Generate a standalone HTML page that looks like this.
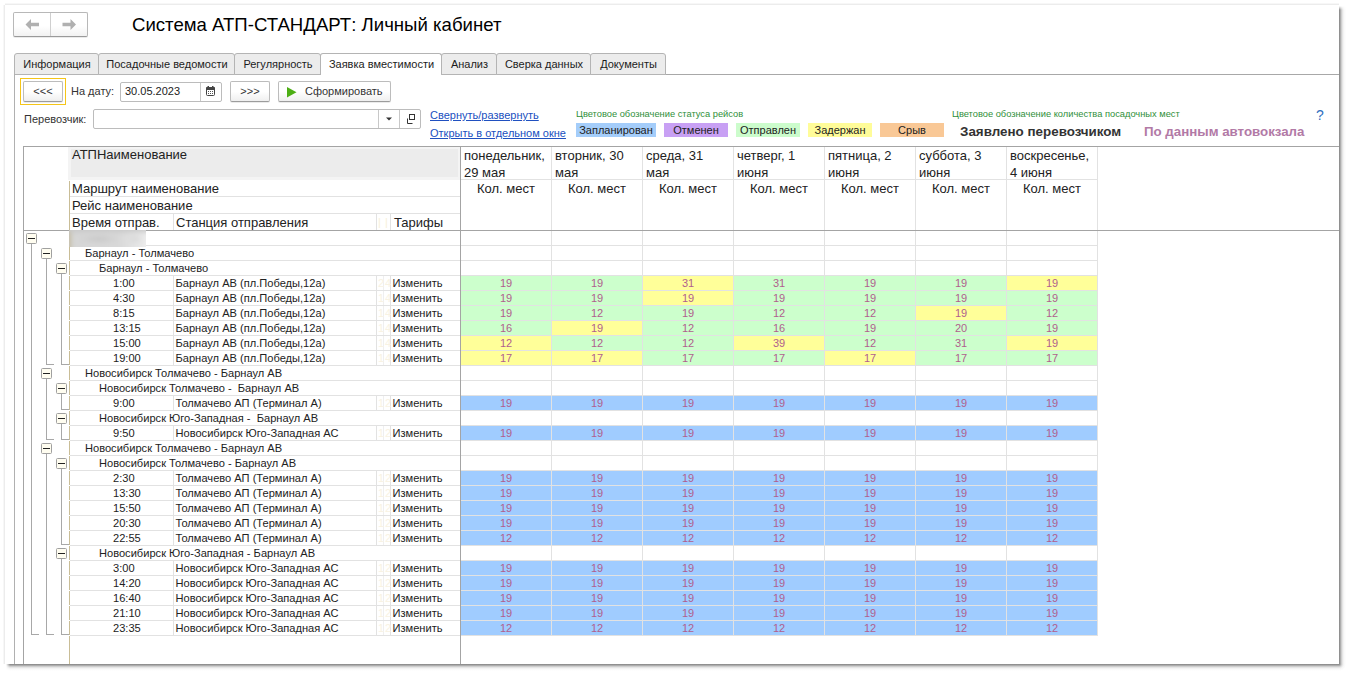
<!DOCTYPE html>
<html><head><meta charset="utf-8"><style>
html,body{margin:0;padding:0;width:1348px;height:673px;overflow:hidden;background:#fff}
.t{position:absolute;font-family:"Liberation Sans", sans-serif;white-space:nowrap;line-height:1.15}
</style></head><body>
<div style="position:absolute;left:4px;top:4px;width:1335px;height:660px;background:#fff;"></div><div style="position:absolute;left:5px;top:4px;width:1334px;height:1px;background:#ececec"></div><div style="position:absolute;left:4px;top:5px;width:1px;height:659px;background:#ececec"></div><div style="position:absolute;left:5px;top:3px;width:1334px;height:1px;background:#f7f7f7"></div><div style="position:absolute;left:3px;top:5px;width:1px;height:659px;background:#f7f7f7"></div><div style="position:absolute;left:1339px;top:6px;width:7px;height:658px;background:linear-gradient(90deg,#858585 0px,#9a9a9a 1px,#c0c0c0 2px,#dcdcdc 3px,#eeeeee 4px,#f8f8f8 5px,#fff 7px);-webkit-mask:linear-gradient(180deg,transparent 0,#000 4px)"></div><div style="position:absolute;left:6px;top:664px;width:1333px;height:7px;background:linear-gradient(180deg,#858585 0px,#9a9a9a 1px,#c0c0c0 2px,#dcdcdc 3px,#eeeeee 4px,#f8f8f8 5px,#fff 7px);-webkit-mask:linear-gradient(90deg,transparent 0,#000 4px)"></div><div style="position:absolute;left:1339px;top:664px;width:7px;height:7px;background:radial-gradient(circle at 0 0,#858585 0px,#9a9a9a 1px,#c0c0c0 2px,#dcdcdc 3px,#eeeeee 4px,#f8f8f8 5px,#fff 7px)"></div><div style="position:absolute;left:13px;top:12px;width:75px;height:25px;box-sizing:border-box;border:1px solid #b8b8b8;border-bottom-color:#9a9a9a;border-radius:2px;background:linear-gradient(#ffffff 0%,#ffffff 55%,#f2f2f2 100%);box-shadow:0 1px 0 rgba(0,0,0,.08);"></div><div style="position:absolute;left:50px;top:13px;width:1px;height:23px;background:#cfcfcf"></div><svg style="position:absolute;left:13px;top:12px" width="75" height="25"><path d="M12.5 12.5 L18 7 L18 10.7 L26 10.7 L26 14.3 L18 14.3 L18 18 Z" fill="#b0b0b0"/><path d="M63 12.5 L57.5 7 L57.5 10.7 L49.5 10.7 L49.5 14.3 L57.5 14.3 L57.5 18 Z" fill="#b0b0b0"/></svg><div class="t" style="left:132px;top:14px;font-size:18.6px;color:#000;">Система АТП-СТАНДАРТ: Личный кабинет</div><div style="position:absolute;left:14px;top:74px;width:1325px;height:1px;background:#a8a8a8"></div><div style="position:absolute;left:14px;top:53px;width:85px;height:22px;box-sizing:border-box;border:1px solid #b4b4b4;border-radius:3px 3px 0 0;background:#ececec;"></div><div class="t" style="left:15px;top:58px;width:84px;text-align:center;font-size:11px;color:#1c1c1c">Информация</div><div style="position:absolute;left:98px;top:53px;width:137px;height:22px;box-sizing:border-box;border:1px solid #b4b4b4;border-radius:3px 3px 0 0;background:#ececec;"></div><div class="t" style="left:99px;top:58px;width:136px;text-align:center;font-size:11px;color:#1c1c1c">Посадочные ведомости</div><div style="position:absolute;left:234px;top:53px;width:87px;height:22px;box-sizing:border-box;border:1px solid #b4b4b4;border-radius:3px 3px 0 0;background:#ececec;"></div><div class="t" style="left:235px;top:58px;width:86px;text-align:center;font-size:11px;color:#1c1c1c">Регулярность</div><div style="position:absolute;left:320px;top:53px;width:122px;height:22px;box-sizing:border-box;border:1px solid #b4b4b4;border-bottom:none;border-radius:3px 3px 0 0;background:#fff;"></div><div class="t" style="left:321px;top:58px;width:121px;text-align:center;font-size:11px;color:#1c1c1c">Заявка вместимости</div><div style="position:absolute;left:441px;top:53px;width:56px;height:22px;box-sizing:border-box;border:1px solid #b4b4b4;border-radius:3px 3px 0 0;background:#ececec;"></div><div class="t" style="left:442px;top:58px;width:55px;text-align:center;font-size:11px;color:#1c1c1c">Анализ</div><div style="position:absolute;left:496px;top:53px;width:95px;height:22px;box-sizing:border-box;border:1px solid #b4b4b4;border-radius:3px 3px 0 0;background:#ececec;"></div><div class="t" style="left:497px;top:58px;width:94px;text-align:center;font-size:11px;color:#1c1c1c">Сверка данных</div><div style="position:absolute;left:590px;top:53px;width:76px;height:22px;box-sizing:border-box;border:1px solid #b4b4b4;border-radius:3px 3px 0 0;background:#ececec;"></div><div class="t" style="left:591px;top:58px;width:75px;text-align:center;font-size:11px;color:#1c1c1c">Документы</div><div style="position:absolute;left:14px;top:74px;width:1px;height:590px;background:#b0b0b0"></div><div style="position:absolute;left:20px;top:78px;width:46px;height:27px;box-sizing:border-box;border:1px solid #f5c518;"></div><div style="position:absolute;left:23px;top:81px;width:40px;height:21px;box-sizing:border-box;border:1px solid #bcbcbc;border-bottom-color:#9c9c9c;border-radius:2px;background:linear-gradient(#fff 0%,#fff 50%,#efefef 100%);box-shadow:0 1px 0 rgba(0,0,0,.08)"></div><div class="t" style="left:23px;top:85px;font-size:11px;color:#333;width:40px;text-align:center">&lt;&lt;&lt;</div><div class="t" style="left:71px;top:85px;font-size:11px;color:#333;">На дату:</div><div style="position:absolute;left:120px;top:82px;width:102px;height:20px;box-sizing:border-box;border:1px solid #bcbcbc;border-radius:2px;background:#fff"></div><div style="position:absolute;left:200px;top:83px;width:1px;height:18px;background:#c8c8c8"></div><div class="t" style="left:125px;top:85px;font-size:11px;color:#222;">30.05.2023</div><svg style="position:absolute;left:206px;top:86px" width="9" height="10"><rect x="0.5" y="1.5" width="8" height="8" rx="1" fill="none" stroke="#444"/><rect x="0" y="1" width="9" height="3" rx="1" fill="#444"/><rect x="1.5" y="0" width="1.5" height="2" fill="#444"/><rect x="6" y="0" width="1.5" height="2" fill="#444"/><g fill="#555"><rect x="2" y="5" width="1" height="1"/><rect x="4" y="5" width="1" height="1"/><rect x="6" y="5" width="1" height="1"/><rect x="2" y="7" width="1" height="1"/><rect x="4" y="7" width="1" height="1"/><rect x="6" y="7" width="1" height="1"/></g></svg><div style="position:absolute;left:230px;top:81px;width:40px;height:21px;box-sizing:border-box;border:1px solid #bcbcbc;border-bottom-color:#9c9c9c;border-radius:2px;background:linear-gradient(#fff 0%,#fff 50%,#efefef 100%);box-shadow:0 1px 0 rgba(0,0,0,.08)"></div><div class="t" style="left:230px;top:85px;font-size:11px;color:#333;width:40px;text-align:center">&gt;&gt;&gt;</div><div style="position:absolute;left:278px;top:81px;width:113px;height:21px;box-sizing:border-box;border:1px solid #bcbcbc;border-bottom-color:#9c9c9c;border-radius:2px;background:linear-gradient(#fff 0%,#fff 50%,#efefef 100%);box-shadow:0 1px 0 rgba(0,0,0,.08)"></div><svg style="position:absolute;left:287px;top:87px" width="10" height="11"><path d="M0 0 L9.5 5.2 L0 10.5 Z" fill="#4cae14"/></svg><div class="t" style="left:305px;top:85px;font-size:11px;color:#333;">Сформировать</div><div class="t" style="left:24px;top:113px;font-size:11px;color:#333;">Перевозчик:</div><div style="position:absolute;left:93px;top:109px;width:328px;height:20px;box-sizing:border-box;border:1px solid #bcbcbc;border-radius:2px;background:#fff"></div><div style="position:absolute;left:378px;top:110px;width:1px;height:18px;background:#c8c8c8"></div><div style="position:absolute;left:399px;top:110px;width:1px;height:18px;background:#c8c8c8"></div><svg style="position:absolute;left:384px;top:115px" width="10" height="8"><path d="M2 2.5 L8 2.5 L5 5.5 Z" fill="#333"/></svg><svg style="position:absolute;left:403px;top:112px" width="14" height="14"><path d="M4.5 6.5 V11.5 H9.5" fill="none" stroke="#333"/><rect x="6.5" y="2.5" width="5" height="5" fill="none" stroke="#333"/></svg><div class="t" style="left:430px;top:109px;font-size:11px;color:#2050c0;text-decoration:underline">Свернуть/развернуть</div><div class="t" style="left:430px;top:127px;font-size:11px;color:#2050c0;text-decoration:underline">Открыть в отдельном окне</div><div class="t" style="left:576px;top:109px;font-size:9.3px;color:#2f8f3a;">Цветовое обозначение статуса рейсов</div><div style="position:absolute;left:576px;top:123px;width:80px;height:14px;background:#a4cdfa"></div><div class="t" style="left:576px;top:124px;font-size:11px;color:#222;width:80px;text-align:center">Запланирован</div><div style="position:absolute;left:664px;top:123px;width:64px;height:14px;background:#c8a0f4"></div><div class="t" style="left:664px;top:124px;font-size:11px;color:#222;width:64px;text-align:center">Отменен</div><div style="position:absolute;left:736px;top:123px;width:64px;height:14px;background:#ccfccc"></div><div class="t" style="left:736px;top:124px;font-size:11px;color:#222;width:64px;text-align:center">Отправлен</div><div style="position:absolute;left:808px;top:123px;width:64px;height:14px;background:#fffc99"></div><div class="t" style="left:808px;top:124px;font-size:11px;color:#222;width:64px;text-align:center">Задержан</div><div style="position:absolute;left:880px;top:123px;width:64px;height:14px;background:#f9c896"></div><div class="t" style="left:880px;top:124px;font-size:11px;color:#222;width:64px;text-align:center">Срыв</div><div class="t" style="left:952px;top:109px;font-size:9.3px;color:#2f8f3a;">Цветовое обозначение количества посадочных мест</div><div class="t" style="left:960px;top:124px;font-size:13.4px;color:#333;font-weight:bold">Заявлено перевозчиком</div><div class="t" style="left:1144px;top:124px;font-size:13.3px;color:#b27aa6;font-weight:bold">По данным автовокзала</div><div class="t" style="left:1316px;top:107px;font-size:14px;color:#3070c0;">?</div>
<div style="position:absolute;left:0;top:0;width:1339px;height:664px;overflow:hidden">
<div style="position:absolute;left:23px;top:146px;width:1316px;height:1px;background:#a4a4a4"></div><div style="position:absolute;left:23px;top:146px;width:1px;height:518px;background:#a4a4a4"></div><div style="position:absolute;left:460px;top:146px;width:1px;height:518px;background:#a4a4a4"></div><div style="position:absolute;left:23px;top:230px;width:1316px;height:1px;background:#a4a4a4"></div><div style="position:absolute;left:68px;top:147px;width:392px;height:33px;background:#f4f4f4"></div><div style="position:absolute;left:71px;top:149px;width:387px;height:28px;background:#ececec"></div><div class="t" style="left:72px;top:148px;font-size:13px;color:#222;">АТПНаименование</div><div style="position:absolute;left:69px;top:181px;width:1px;height:49px;background:#c9bd96"></div><div style="position:absolute;left:70px;top:196px;width:390px;height:1px;background:#e2e2e2"></div><div style="position:absolute;left:70px;top:213px;width:390px;height:1px;background:#e2e2e2"></div><div class="t" style="left:72px;top:182px;font-size:13px;color:#222;">Маршрут наименование</div><div class="t" style="left:72px;top:199px;font-size:13px;color:#222;">Рейс наименование</div><div class="t" style="left:72px;top:216px;font-size:13px;color:#222;">Время отправ.</div><div style="position:absolute;left:173px;top:214px;width:1px;height:16px;background:#e2e2e2"></div><div class="t" style="left:176px;top:216px;font-size:13px;color:#222;">Станция отправления</div><div style="position:absolute;left:376px;top:214px;width:1px;height:16px;background:#e2e2e2"></div><div style="position:absolute;left:390px;top:214px;width:1px;height:16px;background:#e2e2e2"></div><div class="t" style="left:378px;top:216px;font-size:11px;color:#f8f0d8;">|</div><div class="t" style="left:385px;top:216px;font-size:11px;color:#f8f0d8;">|</div><div class="t" style="left:394px;top:216px;font-size:13px;color:#222;">Тарифы</div><div class="t" style="left:464px;top:149px;font-size:13px;color:#222;">понедельник,</div><div class="t" style="left:464px;top:166px;font-size:13px;color:#222;">29 мая</div><div class="t" style="left:461px;top:182px;font-size:13px;color:#222;width:90px;text-align:center">Кол. мест</div><div class="t" style="left:555px;top:149px;font-size:13px;color:#222;">вторник, 30</div><div class="t" style="left:555px;top:166px;font-size:13px;color:#222;">мая</div><div class="t" style="left:552px;top:182px;font-size:13px;color:#222;width:90px;text-align:center">Кол. мест</div><div class="t" style="left:646px;top:149px;font-size:13px;color:#222;">среда, 31</div><div class="t" style="left:646px;top:166px;font-size:13px;color:#222;">мая</div><div class="t" style="left:643px;top:182px;font-size:13px;color:#222;width:90px;text-align:center">Кол. мест</div><div class="t" style="left:737px;top:149px;font-size:13px;color:#222;">четверг, 1</div><div class="t" style="left:737px;top:166px;font-size:13px;color:#222;">июня</div><div class="t" style="left:734px;top:182px;font-size:13px;color:#222;width:90px;text-align:center">Кол. мест</div><div class="t" style="left:828px;top:149px;font-size:13px;color:#222;">пятница, 2</div><div class="t" style="left:828px;top:166px;font-size:13px;color:#222;">июня</div><div class="t" style="left:825px;top:182px;font-size:13px;color:#222;width:90px;text-align:center">Кол. мест</div><div class="t" style="left:919px;top:149px;font-size:13px;color:#222;">суббота, 3</div><div class="t" style="left:919px;top:166px;font-size:13px;color:#222;">июня</div><div class="t" style="left:916px;top:182px;font-size:13px;color:#222;width:90px;text-align:center">Кол. мест</div><div class="t" style="left:1010px;top:149px;font-size:13px;color:#222;">воскресенье,</div><div class="t" style="left:1010px;top:166px;font-size:13px;color:#222;">4 июня</div><div class="t" style="left:1007px;top:182px;font-size:13px;color:#222;width:90px;text-align:center">Кол. мест</div><div style="position:absolute;left:551px;top:147px;width:1px;height:83px;background:#e2e2e2"></div><div style="position:absolute;left:642px;top:147px;width:1px;height:83px;background:#e2e2e2"></div><div style="position:absolute;left:733px;top:147px;width:1px;height:83px;background:#e2e2e2"></div><div style="position:absolute;left:824px;top:147px;width:1px;height:83px;background:#e2e2e2"></div><div style="position:absolute;left:915px;top:147px;width:1px;height:83px;background:#e2e2e2"></div><div style="position:absolute;left:1006px;top:147px;width:1px;height:83px;background:#e2e2e2"></div><div style="position:absolute;left:1097px;top:147px;width:1px;height:83px;background:#e2e2e2"></div><div style="position:absolute;left:461px;top:179px;width:636px;height:1px;background:#e2e2e2"></div><div style="position:absolute;left:70px;top:245px;width:390px;height:1px;background:#e2e2e2"></div><div style="position:absolute;left:69px;top:231px;width:1px;height:14px;background:#c9bd96"></div><div style="position:absolute;left:551px;top:231px;width:1px;height:15px;background:#e2e2e2"></div><div style="position:absolute;left:642px;top:231px;width:1px;height:15px;background:#e2e2e2"></div><div style="position:absolute;left:733px;top:231px;width:1px;height:15px;background:#e2e2e2"></div><div style="position:absolute;left:824px;top:231px;width:1px;height:15px;background:#e2e2e2"></div><div style="position:absolute;left:915px;top:231px;width:1px;height:15px;background:#e2e2e2"></div><div style="position:absolute;left:1006px;top:231px;width:1px;height:15px;background:#e2e2e2"></div><div style="position:absolute;left:1097px;top:231px;width:1px;height:15px;background:#e2e2e2"></div><div style="position:absolute;left:461px;top:245px;width:636px;height:1px;background:#e2e2e2"></div><div style="position:absolute;left:70px;top:260px;width:390px;height:1px;background:#e2e2e2"></div><div style="position:absolute;left:69px;top:246px;width:1px;height:14px;background:#c9bd96"></div><div class="t" style="left:85px;top:247px;font-size:11.1px;color:#222;">Барнаул - Толмачево</div><div style="position:absolute;left:551px;top:246px;width:1px;height:15px;background:#e2e2e2"></div><div style="position:absolute;left:642px;top:246px;width:1px;height:15px;background:#e2e2e2"></div><div style="position:absolute;left:733px;top:246px;width:1px;height:15px;background:#e2e2e2"></div><div style="position:absolute;left:824px;top:246px;width:1px;height:15px;background:#e2e2e2"></div><div style="position:absolute;left:915px;top:246px;width:1px;height:15px;background:#e2e2e2"></div><div style="position:absolute;left:1006px;top:246px;width:1px;height:15px;background:#e2e2e2"></div><div style="position:absolute;left:1097px;top:246px;width:1px;height:15px;background:#e2e2e2"></div><div style="position:absolute;left:461px;top:260px;width:636px;height:1px;background:#e2e2e2"></div><div style="position:absolute;left:70px;top:275px;width:390px;height:1px;background:#e2e2e2"></div><div style="position:absolute;left:69px;top:261px;width:1px;height:14px;background:#c9bd96"></div><div class="t" style="left:99px;top:262px;font-size:11.1px;color:#222;">Барнаул - Толмачево</div><div style="position:absolute;left:551px;top:261px;width:1px;height:15px;background:#e2e2e2"></div><div style="position:absolute;left:642px;top:261px;width:1px;height:15px;background:#e2e2e2"></div><div style="position:absolute;left:733px;top:261px;width:1px;height:15px;background:#e2e2e2"></div><div style="position:absolute;left:824px;top:261px;width:1px;height:15px;background:#e2e2e2"></div><div style="position:absolute;left:915px;top:261px;width:1px;height:15px;background:#e2e2e2"></div><div style="position:absolute;left:1006px;top:261px;width:1px;height:15px;background:#e2e2e2"></div><div style="position:absolute;left:1097px;top:261px;width:1px;height:15px;background:#e2e2e2"></div><div style="position:absolute;left:461px;top:275px;width:636px;height:1px;background:#e2e2e2"></div><div style="position:absolute;left:70px;top:290px;width:390px;height:1px;background:#e2e2e2"></div><div style="position:absolute;left:69px;top:276px;width:1px;height:14px;background:#c9bd96"></div><div class="t" style="left:113px;top:277px;font-size:11.1px;color:#222;">1:00</div><div style="position:absolute;left:173px;top:276px;width:1px;height:14px;background:#e2e2e2"></div><div class="t" style="left:175.5px;top:277px;font-size:11.1px;color:#222;">Барнаул АВ (пл.Победы,12а)</div><div style="position:absolute;left:376px;top:276px;width:1px;height:14px;background:#e2e2e2"></div><div style="position:absolute;left:383px;top:276px;width:1px;height:14px;background:#efefef"></div><div style="position:absolute;left:390px;top:276px;width:1px;height:14px;background:#e2e2e2"></div><div class="t" style="left:378px;top:277px;font-size:11px;color:#f8f2e2;">2</div><div class="t" style="left:385px;top:277px;font-size:11px;color:#f8f2e2;">4</div><div class="t" style="left:392.5px;top:277px;font-size:11.1px;color:#222;">Изменить</div><div style="position:absolute;left:461px;top:276px;width:90px;height:14px;background:#ccffcc"></div><div class="t" style="left:461px;top:277px;font-size:11px;color:#b0608e;width:90px;text-align:center">19</div><div style="position:absolute;left:552px;top:276px;width:90px;height:14px;background:#ccffcc"></div><div class="t" style="left:552px;top:277px;font-size:11px;color:#b0608e;width:90px;text-align:center">19</div><div style="position:absolute;left:643px;top:276px;width:90px;height:14px;background:#ffff99"></div><div class="t" style="left:643px;top:277px;font-size:11px;color:#b0608e;width:90px;text-align:center">31</div><div style="position:absolute;left:734px;top:276px;width:90px;height:14px;background:#ccffcc"></div><div class="t" style="left:734px;top:277px;font-size:11px;color:#b0608e;width:90px;text-align:center">31</div><div style="position:absolute;left:825px;top:276px;width:90px;height:14px;background:#ccffcc"></div><div class="t" style="left:825px;top:277px;font-size:11px;color:#b0608e;width:90px;text-align:center">19</div><div style="position:absolute;left:916px;top:276px;width:90px;height:14px;background:#ccffcc"></div><div class="t" style="left:916px;top:277px;font-size:11px;color:#b0608e;width:90px;text-align:center">19</div><div style="position:absolute;left:1007px;top:276px;width:90px;height:14px;background:#ffff99"></div><div class="t" style="left:1007px;top:277px;font-size:11px;color:#b0608e;width:90px;text-align:center">19</div><div style="position:absolute;left:551px;top:276px;width:1px;height:15px;background:#e2e2e2"></div><div style="position:absolute;left:642px;top:276px;width:1px;height:15px;background:#e2e2e2"></div><div style="position:absolute;left:733px;top:276px;width:1px;height:15px;background:#e2e2e2"></div><div style="position:absolute;left:824px;top:276px;width:1px;height:15px;background:#e2e2e2"></div><div style="position:absolute;left:915px;top:276px;width:1px;height:15px;background:#e2e2e2"></div><div style="position:absolute;left:1006px;top:276px;width:1px;height:15px;background:#e2e2e2"></div><div style="position:absolute;left:1097px;top:276px;width:1px;height:15px;background:#e2e2e2"></div><div style="position:absolute;left:461px;top:290px;width:636px;height:1px;background:#e2e2e2"></div><div style="position:absolute;left:70px;top:305px;width:390px;height:1px;background:#e2e2e2"></div><div style="position:absolute;left:69px;top:291px;width:1px;height:14px;background:#c9bd96"></div><div class="t" style="left:113px;top:292px;font-size:11.1px;color:#222;">4:30</div><div style="position:absolute;left:173px;top:291px;width:1px;height:14px;background:#e2e2e2"></div><div class="t" style="left:175.5px;top:292px;font-size:11.1px;color:#222;">Барнаул АВ (пл.Победы,12а)</div><div style="position:absolute;left:376px;top:291px;width:1px;height:14px;background:#e2e2e2"></div><div style="position:absolute;left:383px;top:291px;width:1px;height:14px;background:#efefef"></div><div style="position:absolute;left:390px;top:291px;width:1px;height:14px;background:#e2e2e2"></div><div class="t" style="left:378px;top:292px;font-size:11px;color:#f8f2e2;">1</div><div class="t" style="left:385px;top:292px;font-size:11px;color:#f8f2e2;">4</div><div class="t" style="left:392.5px;top:292px;font-size:11.1px;color:#222;">Изменить</div><div style="position:absolute;left:461px;top:291px;width:90px;height:14px;background:#ccffcc"></div><div class="t" style="left:461px;top:292px;font-size:11px;color:#b0608e;width:90px;text-align:center">19</div><div style="position:absolute;left:552px;top:291px;width:90px;height:14px;background:#ccffcc"></div><div class="t" style="left:552px;top:292px;font-size:11px;color:#b0608e;width:90px;text-align:center">19</div><div style="position:absolute;left:643px;top:291px;width:90px;height:14px;background:#ffff99"></div><div class="t" style="left:643px;top:292px;font-size:11px;color:#b0608e;width:90px;text-align:center">19</div><div style="position:absolute;left:734px;top:291px;width:90px;height:14px;background:#ccffcc"></div><div class="t" style="left:734px;top:292px;font-size:11px;color:#b0608e;width:90px;text-align:center">19</div><div style="position:absolute;left:825px;top:291px;width:90px;height:14px;background:#ccffcc"></div><div class="t" style="left:825px;top:292px;font-size:11px;color:#b0608e;width:90px;text-align:center">19</div><div style="position:absolute;left:916px;top:291px;width:90px;height:14px;background:#ccffcc"></div><div class="t" style="left:916px;top:292px;font-size:11px;color:#b0608e;width:90px;text-align:center">19</div><div style="position:absolute;left:1007px;top:291px;width:90px;height:14px;background:#ccffcc"></div><div class="t" style="left:1007px;top:292px;font-size:11px;color:#b0608e;width:90px;text-align:center">19</div><div style="position:absolute;left:551px;top:291px;width:1px;height:15px;background:#e2e2e2"></div><div style="position:absolute;left:642px;top:291px;width:1px;height:15px;background:#e2e2e2"></div><div style="position:absolute;left:733px;top:291px;width:1px;height:15px;background:#e2e2e2"></div><div style="position:absolute;left:824px;top:291px;width:1px;height:15px;background:#e2e2e2"></div><div style="position:absolute;left:915px;top:291px;width:1px;height:15px;background:#e2e2e2"></div><div style="position:absolute;left:1006px;top:291px;width:1px;height:15px;background:#e2e2e2"></div><div style="position:absolute;left:1097px;top:291px;width:1px;height:15px;background:#e2e2e2"></div><div style="position:absolute;left:461px;top:305px;width:636px;height:1px;background:#e2e2e2"></div><div style="position:absolute;left:70px;top:320px;width:390px;height:1px;background:#e2e2e2"></div><div style="position:absolute;left:69px;top:306px;width:1px;height:14px;background:#c9bd96"></div><div class="t" style="left:113px;top:307px;font-size:11.1px;color:#222;">8:15</div><div style="position:absolute;left:173px;top:306px;width:1px;height:14px;background:#e2e2e2"></div><div class="t" style="left:175.5px;top:307px;font-size:11.1px;color:#222;">Барнаул АВ (пл.Победы,12а)</div><div style="position:absolute;left:376px;top:306px;width:1px;height:14px;background:#e2e2e2"></div><div style="position:absolute;left:383px;top:306px;width:1px;height:14px;background:#efefef"></div><div style="position:absolute;left:390px;top:306px;width:1px;height:14px;background:#e2e2e2"></div><div class="t" style="left:378px;top:307px;font-size:11px;color:#f8f2e2;">1</div><div class="t" style="left:385px;top:307px;font-size:11px;color:#f8f2e2;">4</div><div class="t" style="left:392.5px;top:307px;font-size:11.1px;color:#222;">Изменить</div><div style="position:absolute;left:461px;top:306px;width:90px;height:14px;background:#ccffcc"></div><div class="t" style="left:461px;top:307px;font-size:11px;color:#b0608e;width:90px;text-align:center">19</div><div style="position:absolute;left:552px;top:306px;width:90px;height:14px;background:#ccffcc"></div><div class="t" style="left:552px;top:307px;font-size:11px;color:#b0608e;width:90px;text-align:center">12</div><div style="position:absolute;left:643px;top:306px;width:90px;height:14px;background:#ccffcc"></div><div class="t" style="left:643px;top:307px;font-size:11px;color:#b0608e;width:90px;text-align:center">19</div><div style="position:absolute;left:734px;top:306px;width:90px;height:14px;background:#ccffcc"></div><div class="t" style="left:734px;top:307px;font-size:11px;color:#b0608e;width:90px;text-align:center">12</div><div style="position:absolute;left:825px;top:306px;width:90px;height:14px;background:#ccffcc"></div><div class="t" style="left:825px;top:307px;font-size:11px;color:#b0608e;width:90px;text-align:center">12</div><div style="position:absolute;left:916px;top:306px;width:90px;height:14px;background:#ffff99"></div><div class="t" style="left:916px;top:307px;font-size:11px;color:#b0608e;width:90px;text-align:center">19</div><div style="position:absolute;left:1007px;top:306px;width:90px;height:14px;background:#ccffcc"></div><div class="t" style="left:1007px;top:307px;font-size:11px;color:#b0608e;width:90px;text-align:center">12</div><div style="position:absolute;left:551px;top:306px;width:1px;height:15px;background:#e2e2e2"></div><div style="position:absolute;left:642px;top:306px;width:1px;height:15px;background:#e2e2e2"></div><div style="position:absolute;left:733px;top:306px;width:1px;height:15px;background:#e2e2e2"></div><div style="position:absolute;left:824px;top:306px;width:1px;height:15px;background:#e2e2e2"></div><div style="position:absolute;left:915px;top:306px;width:1px;height:15px;background:#e2e2e2"></div><div style="position:absolute;left:1006px;top:306px;width:1px;height:15px;background:#e2e2e2"></div><div style="position:absolute;left:1097px;top:306px;width:1px;height:15px;background:#e2e2e2"></div><div style="position:absolute;left:461px;top:320px;width:636px;height:1px;background:#e2e2e2"></div><div style="position:absolute;left:70px;top:335px;width:390px;height:1px;background:#e2e2e2"></div><div style="position:absolute;left:69px;top:321px;width:1px;height:14px;background:#c9bd96"></div><div class="t" style="left:113px;top:322px;font-size:11.1px;color:#222;">13:15</div><div style="position:absolute;left:173px;top:321px;width:1px;height:14px;background:#e2e2e2"></div><div class="t" style="left:175.5px;top:322px;font-size:11.1px;color:#222;">Барнаул АВ (пл.Победы,12а)</div><div style="position:absolute;left:376px;top:321px;width:1px;height:14px;background:#e2e2e2"></div><div style="position:absolute;left:383px;top:321px;width:1px;height:14px;background:#efefef"></div><div style="position:absolute;left:390px;top:321px;width:1px;height:14px;background:#e2e2e2"></div><div class="t" style="left:378px;top:322px;font-size:11px;color:#f8f2e2;">1</div><div class="t" style="left:385px;top:322px;font-size:11px;color:#f8f2e2;">4</div><div class="t" style="left:392.5px;top:322px;font-size:11.1px;color:#222;">Изменить</div><div style="position:absolute;left:461px;top:321px;width:90px;height:14px;background:#ccffcc"></div><div class="t" style="left:461px;top:322px;font-size:11px;color:#b0608e;width:90px;text-align:center">16</div><div style="position:absolute;left:552px;top:321px;width:90px;height:14px;background:#ffff99"></div><div class="t" style="left:552px;top:322px;font-size:11px;color:#b0608e;width:90px;text-align:center">19</div><div style="position:absolute;left:643px;top:321px;width:90px;height:14px;background:#ccffcc"></div><div class="t" style="left:643px;top:322px;font-size:11px;color:#b0608e;width:90px;text-align:center">12</div><div style="position:absolute;left:734px;top:321px;width:90px;height:14px;background:#ccffcc"></div><div class="t" style="left:734px;top:322px;font-size:11px;color:#b0608e;width:90px;text-align:center">16</div><div style="position:absolute;left:825px;top:321px;width:90px;height:14px;background:#ccffcc"></div><div class="t" style="left:825px;top:322px;font-size:11px;color:#b0608e;width:90px;text-align:center">19</div><div style="position:absolute;left:916px;top:321px;width:90px;height:14px;background:#ccffcc"></div><div class="t" style="left:916px;top:322px;font-size:11px;color:#b0608e;width:90px;text-align:center">20</div><div style="position:absolute;left:1007px;top:321px;width:90px;height:14px;background:#ccffcc"></div><div class="t" style="left:1007px;top:322px;font-size:11px;color:#b0608e;width:90px;text-align:center">19</div><div style="position:absolute;left:551px;top:321px;width:1px;height:15px;background:#e2e2e2"></div><div style="position:absolute;left:642px;top:321px;width:1px;height:15px;background:#e2e2e2"></div><div style="position:absolute;left:733px;top:321px;width:1px;height:15px;background:#e2e2e2"></div><div style="position:absolute;left:824px;top:321px;width:1px;height:15px;background:#e2e2e2"></div><div style="position:absolute;left:915px;top:321px;width:1px;height:15px;background:#e2e2e2"></div><div style="position:absolute;left:1006px;top:321px;width:1px;height:15px;background:#e2e2e2"></div><div style="position:absolute;left:1097px;top:321px;width:1px;height:15px;background:#e2e2e2"></div><div style="position:absolute;left:461px;top:335px;width:636px;height:1px;background:#e2e2e2"></div><div style="position:absolute;left:70px;top:350px;width:390px;height:1px;background:#e2e2e2"></div><div style="position:absolute;left:69px;top:336px;width:1px;height:14px;background:#c9bd96"></div><div class="t" style="left:113px;top:337px;font-size:11.1px;color:#222;">15:00</div><div style="position:absolute;left:173px;top:336px;width:1px;height:14px;background:#e2e2e2"></div><div class="t" style="left:175.5px;top:337px;font-size:11.1px;color:#222;">Барнаул АВ (пл.Победы,12а)</div><div style="position:absolute;left:376px;top:336px;width:1px;height:14px;background:#e2e2e2"></div><div style="position:absolute;left:383px;top:336px;width:1px;height:14px;background:#efefef"></div><div style="position:absolute;left:390px;top:336px;width:1px;height:14px;background:#e2e2e2"></div><div class="t" style="left:378px;top:337px;font-size:11px;color:#f8f2e2;">1</div><div class="t" style="left:385px;top:337px;font-size:11px;color:#f8f2e2;">4</div><div class="t" style="left:392.5px;top:337px;font-size:11.1px;color:#222;">Изменить</div><div style="position:absolute;left:461px;top:336px;width:90px;height:14px;background:#ffff99"></div><div class="t" style="left:461px;top:337px;font-size:11px;color:#b0608e;width:90px;text-align:center">12</div><div style="position:absolute;left:552px;top:336px;width:90px;height:14px;background:#ccffcc"></div><div class="t" style="left:552px;top:337px;font-size:11px;color:#b0608e;width:90px;text-align:center">12</div><div style="position:absolute;left:643px;top:336px;width:90px;height:14px;background:#ccffcc"></div><div class="t" style="left:643px;top:337px;font-size:11px;color:#b0608e;width:90px;text-align:center">12</div><div style="position:absolute;left:734px;top:336px;width:90px;height:14px;background:#ffff99"></div><div class="t" style="left:734px;top:337px;font-size:11px;color:#b0608e;width:90px;text-align:center">39</div><div style="position:absolute;left:825px;top:336px;width:90px;height:14px;background:#ccffcc"></div><div class="t" style="left:825px;top:337px;font-size:11px;color:#b0608e;width:90px;text-align:center">12</div><div style="position:absolute;left:916px;top:336px;width:90px;height:14px;background:#ccffcc"></div><div class="t" style="left:916px;top:337px;font-size:11px;color:#b0608e;width:90px;text-align:center">31</div><div style="position:absolute;left:1007px;top:336px;width:90px;height:14px;background:#ffff99"></div><div class="t" style="left:1007px;top:337px;font-size:11px;color:#b0608e;width:90px;text-align:center">19</div><div style="position:absolute;left:551px;top:336px;width:1px;height:15px;background:#e2e2e2"></div><div style="position:absolute;left:642px;top:336px;width:1px;height:15px;background:#e2e2e2"></div><div style="position:absolute;left:733px;top:336px;width:1px;height:15px;background:#e2e2e2"></div><div style="position:absolute;left:824px;top:336px;width:1px;height:15px;background:#e2e2e2"></div><div style="position:absolute;left:915px;top:336px;width:1px;height:15px;background:#e2e2e2"></div><div style="position:absolute;left:1006px;top:336px;width:1px;height:15px;background:#e2e2e2"></div><div style="position:absolute;left:1097px;top:336px;width:1px;height:15px;background:#e2e2e2"></div><div style="position:absolute;left:461px;top:350px;width:636px;height:1px;background:#e2e2e2"></div><div style="position:absolute;left:70px;top:365px;width:390px;height:1px;background:#e2e2e2"></div><div style="position:absolute;left:69px;top:351px;width:1px;height:14px;background:#c9bd96"></div><div class="t" style="left:113px;top:352px;font-size:11.1px;color:#222;">19:00</div><div style="position:absolute;left:173px;top:351px;width:1px;height:14px;background:#e2e2e2"></div><div class="t" style="left:175.5px;top:352px;font-size:11.1px;color:#222;">Барнаул АВ (пл.Победы,12а)</div><div style="position:absolute;left:376px;top:351px;width:1px;height:14px;background:#e2e2e2"></div><div style="position:absolute;left:383px;top:351px;width:1px;height:14px;background:#efefef"></div><div style="position:absolute;left:390px;top:351px;width:1px;height:14px;background:#e2e2e2"></div><div class="t" style="left:378px;top:352px;font-size:11px;color:#f8f2e2;">1</div><div class="t" style="left:385px;top:352px;font-size:11px;color:#f8f2e2;">4</div><div class="t" style="left:392.5px;top:352px;font-size:11.1px;color:#222;">Изменить</div><div style="position:absolute;left:461px;top:351px;width:90px;height:14px;background:#ffff99"></div><div class="t" style="left:461px;top:352px;font-size:11px;color:#b0608e;width:90px;text-align:center">17</div><div style="position:absolute;left:552px;top:351px;width:90px;height:14px;background:#ffff99"></div><div class="t" style="left:552px;top:352px;font-size:11px;color:#b0608e;width:90px;text-align:center">17</div><div style="position:absolute;left:643px;top:351px;width:90px;height:14px;background:#ccffcc"></div><div class="t" style="left:643px;top:352px;font-size:11px;color:#b0608e;width:90px;text-align:center">17</div><div style="position:absolute;left:734px;top:351px;width:90px;height:14px;background:#ccffcc"></div><div class="t" style="left:734px;top:352px;font-size:11px;color:#b0608e;width:90px;text-align:center">17</div><div style="position:absolute;left:825px;top:351px;width:90px;height:14px;background:#ffff99"></div><div class="t" style="left:825px;top:352px;font-size:11px;color:#b0608e;width:90px;text-align:center">17</div><div style="position:absolute;left:916px;top:351px;width:90px;height:14px;background:#ccffcc"></div><div class="t" style="left:916px;top:352px;font-size:11px;color:#b0608e;width:90px;text-align:center">17</div><div style="position:absolute;left:1007px;top:351px;width:90px;height:14px;background:#ccffcc"></div><div class="t" style="left:1007px;top:352px;font-size:11px;color:#b0608e;width:90px;text-align:center">17</div><div style="position:absolute;left:551px;top:351px;width:1px;height:15px;background:#e2e2e2"></div><div style="position:absolute;left:642px;top:351px;width:1px;height:15px;background:#e2e2e2"></div><div style="position:absolute;left:733px;top:351px;width:1px;height:15px;background:#e2e2e2"></div><div style="position:absolute;left:824px;top:351px;width:1px;height:15px;background:#e2e2e2"></div><div style="position:absolute;left:915px;top:351px;width:1px;height:15px;background:#e2e2e2"></div><div style="position:absolute;left:1006px;top:351px;width:1px;height:15px;background:#e2e2e2"></div><div style="position:absolute;left:1097px;top:351px;width:1px;height:15px;background:#e2e2e2"></div><div style="position:absolute;left:461px;top:365px;width:636px;height:1px;background:#e2e2e2"></div><div style="position:absolute;left:70px;top:380px;width:390px;height:1px;background:#e2e2e2"></div><div style="position:absolute;left:69px;top:366px;width:1px;height:14px;background:#c9bd96"></div><div class="t" style="left:85px;top:367px;font-size:11.1px;color:#222;">Новосибирск Толмачево - Барнаул АВ</div><div style="position:absolute;left:551px;top:366px;width:1px;height:15px;background:#e2e2e2"></div><div style="position:absolute;left:642px;top:366px;width:1px;height:15px;background:#e2e2e2"></div><div style="position:absolute;left:733px;top:366px;width:1px;height:15px;background:#e2e2e2"></div><div style="position:absolute;left:824px;top:366px;width:1px;height:15px;background:#e2e2e2"></div><div style="position:absolute;left:915px;top:366px;width:1px;height:15px;background:#e2e2e2"></div><div style="position:absolute;left:1006px;top:366px;width:1px;height:15px;background:#e2e2e2"></div><div style="position:absolute;left:1097px;top:366px;width:1px;height:15px;background:#e2e2e2"></div><div style="position:absolute;left:461px;top:380px;width:636px;height:1px;background:#e2e2e2"></div><div style="position:absolute;left:70px;top:395px;width:390px;height:1px;background:#e2e2e2"></div><div style="position:absolute;left:69px;top:381px;width:1px;height:14px;background:#c9bd96"></div><div class="t" style="left:99px;top:382px;font-size:11.1px;color:#222;">Новосибирск Толмачево -&nbsp; Барнаул АВ</div><div style="position:absolute;left:551px;top:381px;width:1px;height:15px;background:#e2e2e2"></div><div style="position:absolute;left:642px;top:381px;width:1px;height:15px;background:#e2e2e2"></div><div style="position:absolute;left:733px;top:381px;width:1px;height:15px;background:#e2e2e2"></div><div style="position:absolute;left:824px;top:381px;width:1px;height:15px;background:#e2e2e2"></div><div style="position:absolute;left:915px;top:381px;width:1px;height:15px;background:#e2e2e2"></div><div style="position:absolute;left:1006px;top:381px;width:1px;height:15px;background:#e2e2e2"></div><div style="position:absolute;left:1097px;top:381px;width:1px;height:15px;background:#e2e2e2"></div><div style="position:absolute;left:461px;top:395px;width:636px;height:1px;background:#e2e2e2"></div><div style="position:absolute;left:70px;top:410px;width:390px;height:1px;background:#e2e2e2"></div><div style="position:absolute;left:69px;top:396px;width:1px;height:14px;background:#c9bd96"></div><div class="t" style="left:113px;top:397px;font-size:11.1px;color:#222;">9:00</div><div style="position:absolute;left:173px;top:396px;width:1px;height:14px;background:#e2e2e2"></div><div class="t" style="left:175.5px;top:397px;font-size:11.1px;color:#222;">Толмачево АП (Терминал А)</div><div style="position:absolute;left:376px;top:396px;width:1px;height:14px;background:#e2e2e2"></div><div style="position:absolute;left:383px;top:396px;width:1px;height:14px;background:#efefef"></div><div style="position:absolute;left:390px;top:396px;width:1px;height:14px;background:#e2e2e2"></div><div class="t" style="left:378px;top:397px;font-size:11px;color:#f8f2e2;">1</div><div class="t" style="left:385px;top:397px;font-size:11px;color:#f8f2e2;">2</div><div class="t" style="left:392.5px;top:397px;font-size:11.1px;color:#222;">Изменить</div><div style="position:absolute;left:461px;top:396px;width:90px;height:14px;background:#a0ccff"></div><div class="t" style="left:461px;top:397px;font-size:11px;color:#b0608e;width:90px;text-align:center">19</div><div style="position:absolute;left:552px;top:396px;width:90px;height:14px;background:#a0ccff"></div><div class="t" style="left:552px;top:397px;font-size:11px;color:#b0608e;width:90px;text-align:center">19</div><div style="position:absolute;left:643px;top:396px;width:90px;height:14px;background:#a0ccff"></div><div class="t" style="left:643px;top:397px;font-size:11px;color:#b0608e;width:90px;text-align:center">19</div><div style="position:absolute;left:734px;top:396px;width:90px;height:14px;background:#a0ccff"></div><div class="t" style="left:734px;top:397px;font-size:11px;color:#b0608e;width:90px;text-align:center">19</div><div style="position:absolute;left:825px;top:396px;width:90px;height:14px;background:#a0ccff"></div><div class="t" style="left:825px;top:397px;font-size:11px;color:#b0608e;width:90px;text-align:center">19</div><div style="position:absolute;left:916px;top:396px;width:90px;height:14px;background:#a0ccff"></div><div class="t" style="left:916px;top:397px;font-size:11px;color:#b0608e;width:90px;text-align:center">19</div><div style="position:absolute;left:1007px;top:396px;width:90px;height:14px;background:#a0ccff"></div><div class="t" style="left:1007px;top:397px;font-size:11px;color:#b0608e;width:90px;text-align:center">19</div><div style="position:absolute;left:551px;top:396px;width:1px;height:15px;background:#e2e2e2"></div><div style="position:absolute;left:642px;top:396px;width:1px;height:15px;background:#e2e2e2"></div><div style="position:absolute;left:733px;top:396px;width:1px;height:15px;background:#e2e2e2"></div><div style="position:absolute;left:824px;top:396px;width:1px;height:15px;background:#e2e2e2"></div><div style="position:absolute;left:915px;top:396px;width:1px;height:15px;background:#e2e2e2"></div><div style="position:absolute;left:1006px;top:396px;width:1px;height:15px;background:#e2e2e2"></div><div style="position:absolute;left:1097px;top:396px;width:1px;height:15px;background:#e2e2e2"></div><div style="position:absolute;left:461px;top:410px;width:636px;height:1px;background:#e2e2e2"></div><div style="position:absolute;left:70px;top:425px;width:390px;height:1px;background:#e2e2e2"></div><div style="position:absolute;left:69px;top:411px;width:1px;height:14px;background:#c9bd96"></div><div class="t" style="left:99px;top:412px;font-size:11.1px;color:#222;">Новосибирск Юго-Западная -&nbsp; Барнаул АВ</div><div style="position:absolute;left:551px;top:411px;width:1px;height:15px;background:#e2e2e2"></div><div style="position:absolute;left:642px;top:411px;width:1px;height:15px;background:#e2e2e2"></div><div style="position:absolute;left:733px;top:411px;width:1px;height:15px;background:#e2e2e2"></div><div style="position:absolute;left:824px;top:411px;width:1px;height:15px;background:#e2e2e2"></div><div style="position:absolute;left:915px;top:411px;width:1px;height:15px;background:#e2e2e2"></div><div style="position:absolute;left:1006px;top:411px;width:1px;height:15px;background:#e2e2e2"></div><div style="position:absolute;left:1097px;top:411px;width:1px;height:15px;background:#e2e2e2"></div><div style="position:absolute;left:461px;top:425px;width:636px;height:1px;background:#e2e2e2"></div><div style="position:absolute;left:70px;top:440px;width:390px;height:1px;background:#e2e2e2"></div><div style="position:absolute;left:69px;top:426px;width:1px;height:14px;background:#c9bd96"></div><div class="t" style="left:113px;top:427px;font-size:11.1px;color:#222;">9:50</div><div style="position:absolute;left:173px;top:426px;width:1px;height:14px;background:#e2e2e2"></div><div class="t" style="left:175.5px;top:427px;font-size:11.1px;color:#222;">Новосибирск Юго-Западная АС</div><div style="position:absolute;left:376px;top:426px;width:1px;height:14px;background:#e2e2e2"></div><div style="position:absolute;left:383px;top:426px;width:1px;height:14px;background:#efefef"></div><div style="position:absolute;left:390px;top:426px;width:1px;height:14px;background:#e2e2e2"></div><div class="t" style="left:378px;top:427px;font-size:11px;color:#f8f2e2;">1</div><div class="t" style="left:385px;top:427px;font-size:11px;color:#f8f2e2;">2</div><div class="t" style="left:392.5px;top:427px;font-size:11.1px;color:#222;">Изменить</div><div style="position:absolute;left:461px;top:426px;width:90px;height:14px;background:#a0ccff"></div><div class="t" style="left:461px;top:427px;font-size:11px;color:#b0608e;width:90px;text-align:center">19</div><div style="position:absolute;left:552px;top:426px;width:90px;height:14px;background:#a0ccff"></div><div class="t" style="left:552px;top:427px;font-size:11px;color:#b0608e;width:90px;text-align:center">19</div><div style="position:absolute;left:643px;top:426px;width:90px;height:14px;background:#a0ccff"></div><div class="t" style="left:643px;top:427px;font-size:11px;color:#b0608e;width:90px;text-align:center">19</div><div style="position:absolute;left:734px;top:426px;width:90px;height:14px;background:#a0ccff"></div><div class="t" style="left:734px;top:427px;font-size:11px;color:#b0608e;width:90px;text-align:center">19</div><div style="position:absolute;left:825px;top:426px;width:90px;height:14px;background:#a0ccff"></div><div class="t" style="left:825px;top:427px;font-size:11px;color:#b0608e;width:90px;text-align:center">19</div><div style="position:absolute;left:916px;top:426px;width:90px;height:14px;background:#a0ccff"></div><div class="t" style="left:916px;top:427px;font-size:11px;color:#b0608e;width:90px;text-align:center">19</div><div style="position:absolute;left:1007px;top:426px;width:90px;height:14px;background:#a0ccff"></div><div class="t" style="left:1007px;top:427px;font-size:11px;color:#b0608e;width:90px;text-align:center">19</div><div style="position:absolute;left:551px;top:426px;width:1px;height:15px;background:#e2e2e2"></div><div style="position:absolute;left:642px;top:426px;width:1px;height:15px;background:#e2e2e2"></div><div style="position:absolute;left:733px;top:426px;width:1px;height:15px;background:#e2e2e2"></div><div style="position:absolute;left:824px;top:426px;width:1px;height:15px;background:#e2e2e2"></div><div style="position:absolute;left:915px;top:426px;width:1px;height:15px;background:#e2e2e2"></div><div style="position:absolute;left:1006px;top:426px;width:1px;height:15px;background:#e2e2e2"></div><div style="position:absolute;left:1097px;top:426px;width:1px;height:15px;background:#e2e2e2"></div><div style="position:absolute;left:461px;top:440px;width:636px;height:1px;background:#e2e2e2"></div><div style="position:absolute;left:70px;top:455px;width:390px;height:1px;background:#e2e2e2"></div><div style="position:absolute;left:69px;top:441px;width:1px;height:14px;background:#c9bd96"></div><div class="t" style="left:85px;top:442px;font-size:11.1px;color:#222;">Новосибирск Толмачево - Барнаул АВ</div><div style="position:absolute;left:551px;top:441px;width:1px;height:15px;background:#e2e2e2"></div><div style="position:absolute;left:642px;top:441px;width:1px;height:15px;background:#e2e2e2"></div><div style="position:absolute;left:733px;top:441px;width:1px;height:15px;background:#e2e2e2"></div><div style="position:absolute;left:824px;top:441px;width:1px;height:15px;background:#e2e2e2"></div><div style="position:absolute;left:915px;top:441px;width:1px;height:15px;background:#e2e2e2"></div><div style="position:absolute;left:1006px;top:441px;width:1px;height:15px;background:#e2e2e2"></div><div style="position:absolute;left:1097px;top:441px;width:1px;height:15px;background:#e2e2e2"></div><div style="position:absolute;left:461px;top:455px;width:636px;height:1px;background:#e2e2e2"></div><div style="position:absolute;left:70px;top:470px;width:390px;height:1px;background:#e2e2e2"></div><div style="position:absolute;left:69px;top:456px;width:1px;height:14px;background:#c9bd96"></div><div class="t" style="left:99px;top:457px;font-size:11.1px;color:#222;">Новосибирск Толмачево - Барнаул АВ</div><div style="position:absolute;left:551px;top:456px;width:1px;height:15px;background:#e2e2e2"></div><div style="position:absolute;left:642px;top:456px;width:1px;height:15px;background:#e2e2e2"></div><div style="position:absolute;left:733px;top:456px;width:1px;height:15px;background:#e2e2e2"></div><div style="position:absolute;left:824px;top:456px;width:1px;height:15px;background:#e2e2e2"></div><div style="position:absolute;left:915px;top:456px;width:1px;height:15px;background:#e2e2e2"></div><div style="position:absolute;left:1006px;top:456px;width:1px;height:15px;background:#e2e2e2"></div><div style="position:absolute;left:1097px;top:456px;width:1px;height:15px;background:#e2e2e2"></div><div style="position:absolute;left:461px;top:470px;width:636px;height:1px;background:#e2e2e2"></div><div style="position:absolute;left:70px;top:485px;width:390px;height:1px;background:#e2e2e2"></div><div style="position:absolute;left:69px;top:471px;width:1px;height:14px;background:#c9bd96"></div><div class="t" style="left:113px;top:472px;font-size:11.1px;color:#222;">2:30</div><div style="position:absolute;left:173px;top:471px;width:1px;height:14px;background:#e2e2e2"></div><div class="t" style="left:175.5px;top:472px;font-size:11.1px;color:#222;">Толмачево АП (Терминал А)</div><div style="position:absolute;left:376px;top:471px;width:1px;height:14px;background:#e2e2e2"></div><div style="position:absolute;left:383px;top:471px;width:1px;height:14px;background:#efefef"></div><div style="position:absolute;left:390px;top:471px;width:1px;height:14px;background:#e2e2e2"></div><div class="t" style="left:378px;top:472px;font-size:11px;color:#f8f2e2;">1</div><div class="t" style="left:385px;top:472px;font-size:11px;color:#f8f2e2;">2</div><div class="t" style="left:392.5px;top:472px;font-size:11.1px;color:#222;">Изменить</div><div style="position:absolute;left:461px;top:471px;width:90px;height:14px;background:#a0ccff"></div><div class="t" style="left:461px;top:472px;font-size:11px;color:#b0608e;width:90px;text-align:center">19</div><div style="position:absolute;left:552px;top:471px;width:90px;height:14px;background:#a0ccff"></div><div class="t" style="left:552px;top:472px;font-size:11px;color:#b0608e;width:90px;text-align:center">19</div><div style="position:absolute;left:643px;top:471px;width:90px;height:14px;background:#a0ccff"></div><div class="t" style="left:643px;top:472px;font-size:11px;color:#b0608e;width:90px;text-align:center">19</div><div style="position:absolute;left:734px;top:471px;width:90px;height:14px;background:#a0ccff"></div><div class="t" style="left:734px;top:472px;font-size:11px;color:#b0608e;width:90px;text-align:center">19</div><div style="position:absolute;left:825px;top:471px;width:90px;height:14px;background:#a0ccff"></div><div class="t" style="left:825px;top:472px;font-size:11px;color:#b0608e;width:90px;text-align:center">19</div><div style="position:absolute;left:916px;top:471px;width:90px;height:14px;background:#a0ccff"></div><div class="t" style="left:916px;top:472px;font-size:11px;color:#b0608e;width:90px;text-align:center">19</div><div style="position:absolute;left:1007px;top:471px;width:90px;height:14px;background:#a0ccff"></div><div class="t" style="left:1007px;top:472px;font-size:11px;color:#b0608e;width:90px;text-align:center">19</div><div style="position:absolute;left:551px;top:471px;width:1px;height:15px;background:#e2e2e2"></div><div style="position:absolute;left:642px;top:471px;width:1px;height:15px;background:#e2e2e2"></div><div style="position:absolute;left:733px;top:471px;width:1px;height:15px;background:#e2e2e2"></div><div style="position:absolute;left:824px;top:471px;width:1px;height:15px;background:#e2e2e2"></div><div style="position:absolute;left:915px;top:471px;width:1px;height:15px;background:#e2e2e2"></div><div style="position:absolute;left:1006px;top:471px;width:1px;height:15px;background:#e2e2e2"></div><div style="position:absolute;left:1097px;top:471px;width:1px;height:15px;background:#e2e2e2"></div><div style="position:absolute;left:461px;top:485px;width:636px;height:1px;background:#e2e2e2"></div><div style="position:absolute;left:70px;top:500px;width:390px;height:1px;background:#e2e2e2"></div><div style="position:absolute;left:69px;top:486px;width:1px;height:14px;background:#c9bd96"></div><div class="t" style="left:113px;top:487px;font-size:11.1px;color:#222;">13:30</div><div style="position:absolute;left:173px;top:486px;width:1px;height:14px;background:#e2e2e2"></div><div class="t" style="left:175.5px;top:487px;font-size:11.1px;color:#222;">Толмачево АП (Терминал А)</div><div style="position:absolute;left:376px;top:486px;width:1px;height:14px;background:#e2e2e2"></div><div style="position:absolute;left:383px;top:486px;width:1px;height:14px;background:#efefef"></div><div style="position:absolute;left:390px;top:486px;width:1px;height:14px;background:#e2e2e2"></div><div class="t" style="left:378px;top:487px;font-size:11px;color:#f8f2e2;">1</div><div class="t" style="left:385px;top:487px;font-size:11px;color:#f8f2e2;">2</div><div class="t" style="left:392.5px;top:487px;font-size:11.1px;color:#222;">Изменить</div><div style="position:absolute;left:461px;top:486px;width:90px;height:14px;background:#a0ccff"></div><div class="t" style="left:461px;top:487px;font-size:11px;color:#b0608e;width:90px;text-align:center">19</div><div style="position:absolute;left:552px;top:486px;width:90px;height:14px;background:#a0ccff"></div><div class="t" style="left:552px;top:487px;font-size:11px;color:#b0608e;width:90px;text-align:center">19</div><div style="position:absolute;left:643px;top:486px;width:90px;height:14px;background:#a0ccff"></div><div class="t" style="left:643px;top:487px;font-size:11px;color:#b0608e;width:90px;text-align:center">19</div><div style="position:absolute;left:734px;top:486px;width:90px;height:14px;background:#a0ccff"></div><div class="t" style="left:734px;top:487px;font-size:11px;color:#b0608e;width:90px;text-align:center">19</div><div style="position:absolute;left:825px;top:486px;width:90px;height:14px;background:#a0ccff"></div><div class="t" style="left:825px;top:487px;font-size:11px;color:#b0608e;width:90px;text-align:center">19</div><div style="position:absolute;left:916px;top:486px;width:90px;height:14px;background:#a0ccff"></div><div class="t" style="left:916px;top:487px;font-size:11px;color:#b0608e;width:90px;text-align:center">19</div><div style="position:absolute;left:1007px;top:486px;width:90px;height:14px;background:#a0ccff"></div><div class="t" style="left:1007px;top:487px;font-size:11px;color:#b0608e;width:90px;text-align:center">19</div><div style="position:absolute;left:551px;top:486px;width:1px;height:15px;background:#e2e2e2"></div><div style="position:absolute;left:642px;top:486px;width:1px;height:15px;background:#e2e2e2"></div><div style="position:absolute;left:733px;top:486px;width:1px;height:15px;background:#e2e2e2"></div><div style="position:absolute;left:824px;top:486px;width:1px;height:15px;background:#e2e2e2"></div><div style="position:absolute;left:915px;top:486px;width:1px;height:15px;background:#e2e2e2"></div><div style="position:absolute;left:1006px;top:486px;width:1px;height:15px;background:#e2e2e2"></div><div style="position:absolute;left:1097px;top:486px;width:1px;height:15px;background:#e2e2e2"></div><div style="position:absolute;left:461px;top:500px;width:636px;height:1px;background:#e2e2e2"></div><div style="position:absolute;left:70px;top:515px;width:390px;height:1px;background:#e2e2e2"></div><div style="position:absolute;left:69px;top:501px;width:1px;height:14px;background:#c9bd96"></div><div class="t" style="left:113px;top:502px;font-size:11.1px;color:#222;">15:50</div><div style="position:absolute;left:173px;top:501px;width:1px;height:14px;background:#e2e2e2"></div><div class="t" style="left:175.5px;top:502px;font-size:11.1px;color:#222;">Толмачево АП (Терминал А)</div><div style="position:absolute;left:376px;top:501px;width:1px;height:14px;background:#e2e2e2"></div><div style="position:absolute;left:383px;top:501px;width:1px;height:14px;background:#efefef"></div><div style="position:absolute;left:390px;top:501px;width:1px;height:14px;background:#e2e2e2"></div><div class="t" style="left:378px;top:502px;font-size:11px;color:#f8f2e2;">1</div><div class="t" style="left:385px;top:502px;font-size:11px;color:#f8f2e2;">2</div><div class="t" style="left:392.5px;top:502px;font-size:11.1px;color:#222;">Изменить</div><div style="position:absolute;left:461px;top:501px;width:90px;height:14px;background:#a0ccff"></div><div class="t" style="left:461px;top:502px;font-size:11px;color:#b0608e;width:90px;text-align:center">19</div><div style="position:absolute;left:552px;top:501px;width:90px;height:14px;background:#a0ccff"></div><div class="t" style="left:552px;top:502px;font-size:11px;color:#b0608e;width:90px;text-align:center">19</div><div style="position:absolute;left:643px;top:501px;width:90px;height:14px;background:#a0ccff"></div><div class="t" style="left:643px;top:502px;font-size:11px;color:#b0608e;width:90px;text-align:center">19</div><div style="position:absolute;left:734px;top:501px;width:90px;height:14px;background:#a0ccff"></div><div class="t" style="left:734px;top:502px;font-size:11px;color:#b0608e;width:90px;text-align:center">19</div><div style="position:absolute;left:825px;top:501px;width:90px;height:14px;background:#a0ccff"></div><div class="t" style="left:825px;top:502px;font-size:11px;color:#b0608e;width:90px;text-align:center">19</div><div style="position:absolute;left:916px;top:501px;width:90px;height:14px;background:#a0ccff"></div><div class="t" style="left:916px;top:502px;font-size:11px;color:#b0608e;width:90px;text-align:center">19</div><div style="position:absolute;left:1007px;top:501px;width:90px;height:14px;background:#a0ccff"></div><div class="t" style="left:1007px;top:502px;font-size:11px;color:#b0608e;width:90px;text-align:center">19</div><div style="position:absolute;left:551px;top:501px;width:1px;height:15px;background:#e2e2e2"></div><div style="position:absolute;left:642px;top:501px;width:1px;height:15px;background:#e2e2e2"></div><div style="position:absolute;left:733px;top:501px;width:1px;height:15px;background:#e2e2e2"></div><div style="position:absolute;left:824px;top:501px;width:1px;height:15px;background:#e2e2e2"></div><div style="position:absolute;left:915px;top:501px;width:1px;height:15px;background:#e2e2e2"></div><div style="position:absolute;left:1006px;top:501px;width:1px;height:15px;background:#e2e2e2"></div><div style="position:absolute;left:1097px;top:501px;width:1px;height:15px;background:#e2e2e2"></div><div style="position:absolute;left:461px;top:515px;width:636px;height:1px;background:#e2e2e2"></div><div style="position:absolute;left:70px;top:530px;width:390px;height:1px;background:#e2e2e2"></div><div style="position:absolute;left:69px;top:516px;width:1px;height:14px;background:#c9bd96"></div><div class="t" style="left:113px;top:517px;font-size:11.1px;color:#222;">20:30</div><div style="position:absolute;left:173px;top:516px;width:1px;height:14px;background:#e2e2e2"></div><div class="t" style="left:175.5px;top:517px;font-size:11.1px;color:#222;">Толмачево АП (Терминал А)</div><div style="position:absolute;left:376px;top:516px;width:1px;height:14px;background:#e2e2e2"></div><div style="position:absolute;left:383px;top:516px;width:1px;height:14px;background:#efefef"></div><div style="position:absolute;left:390px;top:516px;width:1px;height:14px;background:#e2e2e2"></div><div class="t" style="left:378px;top:517px;font-size:11px;color:#f8f2e2;">1</div><div class="t" style="left:385px;top:517px;font-size:11px;color:#f8f2e2;">2</div><div class="t" style="left:392.5px;top:517px;font-size:11.1px;color:#222;">Изменить</div><div style="position:absolute;left:461px;top:516px;width:90px;height:14px;background:#a0ccff"></div><div class="t" style="left:461px;top:517px;font-size:11px;color:#b0608e;width:90px;text-align:center">19</div><div style="position:absolute;left:552px;top:516px;width:90px;height:14px;background:#a0ccff"></div><div class="t" style="left:552px;top:517px;font-size:11px;color:#b0608e;width:90px;text-align:center">19</div><div style="position:absolute;left:643px;top:516px;width:90px;height:14px;background:#a0ccff"></div><div class="t" style="left:643px;top:517px;font-size:11px;color:#b0608e;width:90px;text-align:center">19</div><div style="position:absolute;left:734px;top:516px;width:90px;height:14px;background:#a0ccff"></div><div class="t" style="left:734px;top:517px;font-size:11px;color:#b0608e;width:90px;text-align:center">19</div><div style="position:absolute;left:825px;top:516px;width:90px;height:14px;background:#a0ccff"></div><div class="t" style="left:825px;top:517px;font-size:11px;color:#b0608e;width:90px;text-align:center">19</div><div style="position:absolute;left:916px;top:516px;width:90px;height:14px;background:#a0ccff"></div><div class="t" style="left:916px;top:517px;font-size:11px;color:#b0608e;width:90px;text-align:center">19</div><div style="position:absolute;left:1007px;top:516px;width:90px;height:14px;background:#a0ccff"></div><div class="t" style="left:1007px;top:517px;font-size:11px;color:#b0608e;width:90px;text-align:center">19</div><div style="position:absolute;left:551px;top:516px;width:1px;height:15px;background:#e2e2e2"></div><div style="position:absolute;left:642px;top:516px;width:1px;height:15px;background:#e2e2e2"></div><div style="position:absolute;left:733px;top:516px;width:1px;height:15px;background:#e2e2e2"></div><div style="position:absolute;left:824px;top:516px;width:1px;height:15px;background:#e2e2e2"></div><div style="position:absolute;left:915px;top:516px;width:1px;height:15px;background:#e2e2e2"></div><div style="position:absolute;left:1006px;top:516px;width:1px;height:15px;background:#e2e2e2"></div><div style="position:absolute;left:1097px;top:516px;width:1px;height:15px;background:#e2e2e2"></div><div style="position:absolute;left:461px;top:530px;width:636px;height:1px;background:#e2e2e2"></div><div style="position:absolute;left:70px;top:545px;width:390px;height:1px;background:#e2e2e2"></div><div style="position:absolute;left:69px;top:531px;width:1px;height:14px;background:#c9bd96"></div><div class="t" style="left:113px;top:532px;font-size:11.1px;color:#222;">22:55</div><div style="position:absolute;left:173px;top:531px;width:1px;height:14px;background:#e2e2e2"></div><div class="t" style="left:175.5px;top:532px;font-size:11.1px;color:#222;">Толмачево АП (Терминал А)</div><div style="position:absolute;left:376px;top:531px;width:1px;height:14px;background:#e2e2e2"></div><div style="position:absolute;left:383px;top:531px;width:1px;height:14px;background:#efefef"></div><div style="position:absolute;left:390px;top:531px;width:1px;height:14px;background:#e2e2e2"></div><div class="t" style="left:378px;top:532px;font-size:11px;color:#f8f2e2;">1</div><div class="t" style="left:385px;top:532px;font-size:11px;color:#f8f2e2;">2</div><div class="t" style="left:392.5px;top:532px;font-size:11.1px;color:#222;">Изменить</div><div style="position:absolute;left:461px;top:531px;width:90px;height:14px;background:#a0ccff"></div><div class="t" style="left:461px;top:532px;font-size:11px;color:#b0608e;width:90px;text-align:center">12</div><div style="position:absolute;left:552px;top:531px;width:90px;height:14px;background:#a0ccff"></div><div class="t" style="left:552px;top:532px;font-size:11px;color:#b0608e;width:90px;text-align:center">12</div><div style="position:absolute;left:643px;top:531px;width:90px;height:14px;background:#a0ccff"></div><div class="t" style="left:643px;top:532px;font-size:11px;color:#b0608e;width:90px;text-align:center">12</div><div style="position:absolute;left:734px;top:531px;width:90px;height:14px;background:#a0ccff"></div><div class="t" style="left:734px;top:532px;font-size:11px;color:#b0608e;width:90px;text-align:center">12</div><div style="position:absolute;left:825px;top:531px;width:90px;height:14px;background:#a0ccff"></div><div class="t" style="left:825px;top:532px;font-size:11px;color:#b0608e;width:90px;text-align:center">12</div><div style="position:absolute;left:916px;top:531px;width:90px;height:14px;background:#a0ccff"></div><div class="t" style="left:916px;top:532px;font-size:11px;color:#b0608e;width:90px;text-align:center">12</div><div style="position:absolute;left:1007px;top:531px;width:90px;height:14px;background:#a0ccff"></div><div class="t" style="left:1007px;top:532px;font-size:11px;color:#b0608e;width:90px;text-align:center">12</div><div style="position:absolute;left:551px;top:531px;width:1px;height:15px;background:#e2e2e2"></div><div style="position:absolute;left:642px;top:531px;width:1px;height:15px;background:#e2e2e2"></div><div style="position:absolute;left:733px;top:531px;width:1px;height:15px;background:#e2e2e2"></div><div style="position:absolute;left:824px;top:531px;width:1px;height:15px;background:#e2e2e2"></div><div style="position:absolute;left:915px;top:531px;width:1px;height:15px;background:#e2e2e2"></div><div style="position:absolute;left:1006px;top:531px;width:1px;height:15px;background:#e2e2e2"></div><div style="position:absolute;left:1097px;top:531px;width:1px;height:15px;background:#e2e2e2"></div><div style="position:absolute;left:461px;top:545px;width:636px;height:1px;background:#e2e2e2"></div><div style="position:absolute;left:70px;top:560px;width:390px;height:1px;background:#e2e2e2"></div><div style="position:absolute;left:69px;top:546px;width:1px;height:14px;background:#c9bd96"></div><div class="t" style="left:99px;top:547px;font-size:11.1px;color:#222;">Новосибирск Юго-Западная - Барнаул АВ</div><div style="position:absolute;left:551px;top:546px;width:1px;height:15px;background:#e2e2e2"></div><div style="position:absolute;left:642px;top:546px;width:1px;height:15px;background:#e2e2e2"></div><div style="position:absolute;left:733px;top:546px;width:1px;height:15px;background:#e2e2e2"></div><div style="position:absolute;left:824px;top:546px;width:1px;height:15px;background:#e2e2e2"></div><div style="position:absolute;left:915px;top:546px;width:1px;height:15px;background:#e2e2e2"></div><div style="position:absolute;left:1006px;top:546px;width:1px;height:15px;background:#e2e2e2"></div><div style="position:absolute;left:1097px;top:546px;width:1px;height:15px;background:#e2e2e2"></div><div style="position:absolute;left:461px;top:560px;width:636px;height:1px;background:#e2e2e2"></div><div style="position:absolute;left:70px;top:575px;width:390px;height:1px;background:#e2e2e2"></div><div style="position:absolute;left:69px;top:561px;width:1px;height:14px;background:#c9bd96"></div><div class="t" style="left:113px;top:562px;font-size:11.1px;color:#222;">3:00</div><div style="position:absolute;left:173px;top:561px;width:1px;height:14px;background:#e2e2e2"></div><div class="t" style="left:175.5px;top:562px;font-size:11.1px;color:#222;">Новосибирск Юго-Западная АС</div><div style="position:absolute;left:376px;top:561px;width:1px;height:14px;background:#e2e2e2"></div><div style="position:absolute;left:383px;top:561px;width:1px;height:14px;background:#efefef"></div><div style="position:absolute;left:390px;top:561px;width:1px;height:14px;background:#e2e2e2"></div><div class="t" style="left:378px;top:562px;font-size:11px;color:#f8f2e2;">1</div><div class="t" style="left:385px;top:562px;font-size:11px;color:#f8f2e2;">2</div><div class="t" style="left:392.5px;top:562px;font-size:11.1px;color:#222;">Изменить</div><div style="position:absolute;left:461px;top:561px;width:90px;height:14px;background:#a0ccff"></div><div class="t" style="left:461px;top:562px;font-size:11px;color:#b0608e;width:90px;text-align:center">19</div><div style="position:absolute;left:552px;top:561px;width:90px;height:14px;background:#a0ccff"></div><div class="t" style="left:552px;top:562px;font-size:11px;color:#b0608e;width:90px;text-align:center">19</div><div style="position:absolute;left:643px;top:561px;width:90px;height:14px;background:#a0ccff"></div><div class="t" style="left:643px;top:562px;font-size:11px;color:#b0608e;width:90px;text-align:center">19</div><div style="position:absolute;left:734px;top:561px;width:90px;height:14px;background:#a0ccff"></div><div class="t" style="left:734px;top:562px;font-size:11px;color:#b0608e;width:90px;text-align:center">19</div><div style="position:absolute;left:825px;top:561px;width:90px;height:14px;background:#a0ccff"></div><div class="t" style="left:825px;top:562px;font-size:11px;color:#b0608e;width:90px;text-align:center">19</div><div style="position:absolute;left:916px;top:561px;width:90px;height:14px;background:#a0ccff"></div><div class="t" style="left:916px;top:562px;font-size:11px;color:#b0608e;width:90px;text-align:center">19</div><div style="position:absolute;left:1007px;top:561px;width:90px;height:14px;background:#a0ccff"></div><div class="t" style="left:1007px;top:562px;font-size:11px;color:#b0608e;width:90px;text-align:center">19</div><div style="position:absolute;left:551px;top:561px;width:1px;height:15px;background:#e2e2e2"></div><div style="position:absolute;left:642px;top:561px;width:1px;height:15px;background:#e2e2e2"></div><div style="position:absolute;left:733px;top:561px;width:1px;height:15px;background:#e2e2e2"></div><div style="position:absolute;left:824px;top:561px;width:1px;height:15px;background:#e2e2e2"></div><div style="position:absolute;left:915px;top:561px;width:1px;height:15px;background:#e2e2e2"></div><div style="position:absolute;left:1006px;top:561px;width:1px;height:15px;background:#e2e2e2"></div><div style="position:absolute;left:1097px;top:561px;width:1px;height:15px;background:#e2e2e2"></div><div style="position:absolute;left:461px;top:575px;width:636px;height:1px;background:#e2e2e2"></div><div style="position:absolute;left:70px;top:590px;width:390px;height:1px;background:#e2e2e2"></div><div style="position:absolute;left:69px;top:576px;width:1px;height:14px;background:#c9bd96"></div><div class="t" style="left:113px;top:577px;font-size:11.1px;color:#222;">14:20</div><div style="position:absolute;left:173px;top:576px;width:1px;height:14px;background:#e2e2e2"></div><div class="t" style="left:175.5px;top:577px;font-size:11.1px;color:#222;">Новосибирск Юго-Западная АС</div><div style="position:absolute;left:376px;top:576px;width:1px;height:14px;background:#e2e2e2"></div><div style="position:absolute;left:383px;top:576px;width:1px;height:14px;background:#efefef"></div><div style="position:absolute;left:390px;top:576px;width:1px;height:14px;background:#e2e2e2"></div><div class="t" style="left:378px;top:577px;font-size:11px;color:#f8f2e2;">1</div><div class="t" style="left:385px;top:577px;font-size:11px;color:#f8f2e2;">2</div><div class="t" style="left:392.5px;top:577px;font-size:11.1px;color:#222;">Изменить</div><div style="position:absolute;left:461px;top:576px;width:90px;height:14px;background:#a0ccff"></div><div class="t" style="left:461px;top:577px;font-size:11px;color:#b0608e;width:90px;text-align:center">19</div><div style="position:absolute;left:552px;top:576px;width:90px;height:14px;background:#a0ccff"></div><div class="t" style="left:552px;top:577px;font-size:11px;color:#b0608e;width:90px;text-align:center">19</div><div style="position:absolute;left:643px;top:576px;width:90px;height:14px;background:#a0ccff"></div><div class="t" style="left:643px;top:577px;font-size:11px;color:#b0608e;width:90px;text-align:center">19</div><div style="position:absolute;left:734px;top:576px;width:90px;height:14px;background:#a0ccff"></div><div class="t" style="left:734px;top:577px;font-size:11px;color:#b0608e;width:90px;text-align:center">19</div><div style="position:absolute;left:825px;top:576px;width:90px;height:14px;background:#a0ccff"></div><div class="t" style="left:825px;top:577px;font-size:11px;color:#b0608e;width:90px;text-align:center">19</div><div style="position:absolute;left:916px;top:576px;width:90px;height:14px;background:#a0ccff"></div><div class="t" style="left:916px;top:577px;font-size:11px;color:#b0608e;width:90px;text-align:center">19</div><div style="position:absolute;left:1007px;top:576px;width:90px;height:14px;background:#a0ccff"></div><div class="t" style="left:1007px;top:577px;font-size:11px;color:#b0608e;width:90px;text-align:center">19</div><div style="position:absolute;left:551px;top:576px;width:1px;height:15px;background:#e2e2e2"></div><div style="position:absolute;left:642px;top:576px;width:1px;height:15px;background:#e2e2e2"></div><div style="position:absolute;left:733px;top:576px;width:1px;height:15px;background:#e2e2e2"></div><div style="position:absolute;left:824px;top:576px;width:1px;height:15px;background:#e2e2e2"></div><div style="position:absolute;left:915px;top:576px;width:1px;height:15px;background:#e2e2e2"></div><div style="position:absolute;left:1006px;top:576px;width:1px;height:15px;background:#e2e2e2"></div><div style="position:absolute;left:1097px;top:576px;width:1px;height:15px;background:#e2e2e2"></div><div style="position:absolute;left:461px;top:590px;width:636px;height:1px;background:#e2e2e2"></div><div style="position:absolute;left:70px;top:605px;width:390px;height:1px;background:#e2e2e2"></div><div style="position:absolute;left:69px;top:591px;width:1px;height:14px;background:#c9bd96"></div><div class="t" style="left:113px;top:592px;font-size:11.1px;color:#222;">16:40</div><div style="position:absolute;left:173px;top:591px;width:1px;height:14px;background:#e2e2e2"></div><div class="t" style="left:175.5px;top:592px;font-size:11.1px;color:#222;">Новосибирск Юго-Западная АС</div><div style="position:absolute;left:376px;top:591px;width:1px;height:14px;background:#e2e2e2"></div><div style="position:absolute;left:383px;top:591px;width:1px;height:14px;background:#efefef"></div><div style="position:absolute;left:390px;top:591px;width:1px;height:14px;background:#e2e2e2"></div><div class="t" style="left:378px;top:592px;font-size:11px;color:#f8f2e2;">1</div><div class="t" style="left:385px;top:592px;font-size:11px;color:#f8f2e2;">2</div><div class="t" style="left:392.5px;top:592px;font-size:11.1px;color:#222;">Изменить</div><div style="position:absolute;left:461px;top:591px;width:90px;height:14px;background:#a0ccff"></div><div class="t" style="left:461px;top:592px;font-size:11px;color:#b0608e;width:90px;text-align:center">19</div><div style="position:absolute;left:552px;top:591px;width:90px;height:14px;background:#a0ccff"></div><div class="t" style="left:552px;top:592px;font-size:11px;color:#b0608e;width:90px;text-align:center">19</div><div style="position:absolute;left:643px;top:591px;width:90px;height:14px;background:#a0ccff"></div><div class="t" style="left:643px;top:592px;font-size:11px;color:#b0608e;width:90px;text-align:center">19</div><div style="position:absolute;left:734px;top:591px;width:90px;height:14px;background:#a0ccff"></div><div class="t" style="left:734px;top:592px;font-size:11px;color:#b0608e;width:90px;text-align:center">19</div><div style="position:absolute;left:825px;top:591px;width:90px;height:14px;background:#a0ccff"></div><div class="t" style="left:825px;top:592px;font-size:11px;color:#b0608e;width:90px;text-align:center">19</div><div style="position:absolute;left:916px;top:591px;width:90px;height:14px;background:#a0ccff"></div><div class="t" style="left:916px;top:592px;font-size:11px;color:#b0608e;width:90px;text-align:center">19</div><div style="position:absolute;left:1007px;top:591px;width:90px;height:14px;background:#a0ccff"></div><div class="t" style="left:1007px;top:592px;font-size:11px;color:#b0608e;width:90px;text-align:center">19</div><div style="position:absolute;left:551px;top:591px;width:1px;height:15px;background:#e2e2e2"></div><div style="position:absolute;left:642px;top:591px;width:1px;height:15px;background:#e2e2e2"></div><div style="position:absolute;left:733px;top:591px;width:1px;height:15px;background:#e2e2e2"></div><div style="position:absolute;left:824px;top:591px;width:1px;height:15px;background:#e2e2e2"></div><div style="position:absolute;left:915px;top:591px;width:1px;height:15px;background:#e2e2e2"></div><div style="position:absolute;left:1006px;top:591px;width:1px;height:15px;background:#e2e2e2"></div><div style="position:absolute;left:1097px;top:591px;width:1px;height:15px;background:#e2e2e2"></div><div style="position:absolute;left:461px;top:605px;width:636px;height:1px;background:#e2e2e2"></div><div style="position:absolute;left:70px;top:620px;width:390px;height:1px;background:#e2e2e2"></div><div style="position:absolute;left:69px;top:606px;width:1px;height:14px;background:#c9bd96"></div><div class="t" style="left:113px;top:607px;font-size:11.1px;color:#222;">21:10</div><div style="position:absolute;left:173px;top:606px;width:1px;height:14px;background:#e2e2e2"></div><div class="t" style="left:175.5px;top:607px;font-size:11.1px;color:#222;">Новосибирск Юго-Западная АС</div><div style="position:absolute;left:376px;top:606px;width:1px;height:14px;background:#e2e2e2"></div><div style="position:absolute;left:383px;top:606px;width:1px;height:14px;background:#efefef"></div><div style="position:absolute;left:390px;top:606px;width:1px;height:14px;background:#e2e2e2"></div><div class="t" style="left:378px;top:607px;font-size:11px;color:#f8f2e2;">1</div><div class="t" style="left:385px;top:607px;font-size:11px;color:#f8f2e2;">2</div><div class="t" style="left:392.5px;top:607px;font-size:11.1px;color:#222;">Изменить</div><div style="position:absolute;left:461px;top:606px;width:90px;height:14px;background:#a0ccff"></div><div class="t" style="left:461px;top:607px;font-size:11px;color:#b0608e;width:90px;text-align:center">19</div><div style="position:absolute;left:552px;top:606px;width:90px;height:14px;background:#a0ccff"></div><div class="t" style="left:552px;top:607px;font-size:11px;color:#b0608e;width:90px;text-align:center">19</div><div style="position:absolute;left:643px;top:606px;width:90px;height:14px;background:#a0ccff"></div><div class="t" style="left:643px;top:607px;font-size:11px;color:#b0608e;width:90px;text-align:center">19</div><div style="position:absolute;left:734px;top:606px;width:90px;height:14px;background:#a0ccff"></div><div class="t" style="left:734px;top:607px;font-size:11px;color:#b0608e;width:90px;text-align:center">19</div><div style="position:absolute;left:825px;top:606px;width:90px;height:14px;background:#a0ccff"></div><div class="t" style="left:825px;top:607px;font-size:11px;color:#b0608e;width:90px;text-align:center">19</div><div style="position:absolute;left:916px;top:606px;width:90px;height:14px;background:#a0ccff"></div><div class="t" style="left:916px;top:607px;font-size:11px;color:#b0608e;width:90px;text-align:center">19</div><div style="position:absolute;left:1007px;top:606px;width:90px;height:14px;background:#a0ccff"></div><div class="t" style="left:1007px;top:607px;font-size:11px;color:#b0608e;width:90px;text-align:center">19</div><div style="position:absolute;left:551px;top:606px;width:1px;height:15px;background:#e2e2e2"></div><div style="position:absolute;left:642px;top:606px;width:1px;height:15px;background:#e2e2e2"></div><div style="position:absolute;left:733px;top:606px;width:1px;height:15px;background:#e2e2e2"></div><div style="position:absolute;left:824px;top:606px;width:1px;height:15px;background:#e2e2e2"></div><div style="position:absolute;left:915px;top:606px;width:1px;height:15px;background:#e2e2e2"></div><div style="position:absolute;left:1006px;top:606px;width:1px;height:15px;background:#e2e2e2"></div><div style="position:absolute;left:1097px;top:606px;width:1px;height:15px;background:#e2e2e2"></div><div style="position:absolute;left:461px;top:620px;width:636px;height:1px;background:#e2e2e2"></div><div style="position:absolute;left:70px;top:635px;width:390px;height:1px;background:#e2e2e2"></div><div style="position:absolute;left:69px;top:621px;width:1px;height:14px;background:#c9bd96"></div><div class="t" style="left:113px;top:622px;font-size:11.1px;color:#222;">23:35</div><div style="position:absolute;left:173px;top:621px;width:1px;height:14px;background:#e2e2e2"></div><div class="t" style="left:175.5px;top:622px;font-size:11.1px;color:#222;">Новосибирск Юго-Западная АС</div><div style="position:absolute;left:376px;top:621px;width:1px;height:14px;background:#e2e2e2"></div><div style="position:absolute;left:383px;top:621px;width:1px;height:14px;background:#efefef"></div><div style="position:absolute;left:390px;top:621px;width:1px;height:14px;background:#e2e2e2"></div><div class="t" style="left:378px;top:622px;font-size:11px;color:#f8f2e2;">1</div><div class="t" style="left:385px;top:622px;font-size:11px;color:#f8f2e2;">2</div><div class="t" style="left:392.5px;top:622px;font-size:11.1px;color:#222;">Изменить</div><div style="position:absolute;left:461px;top:621px;width:90px;height:14px;background:#a0ccff"></div><div class="t" style="left:461px;top:622px;font-size:11px;color:#b0608e;width:90px;text-align:center">12</div><div style="position:absolute;left:552px;top:621px;width:90px;height:14px;background:#a0ccff"></div><div class="t" style="left:552px;top:622px;font-size:11px;color:#b0608e;width:90px;text-align:center">12</div><div style="position:absolute;left:643px;top:621px;width:90px;height:14px;background:#a0ccff"></div><div class="t" style="left:643px;top:622px;font-size:11px;color:#b0608e;width:90px;text-align:center">12</div><div style="position:absolute;left:734px;top:621px;width:90px;height:14px;background:#a0ccff"></div><div class="t" style="left:734px;top:622px;font-size:11px;color:#b0608e;width:90px;text-align:center">12</div><div style="position:absolute;left:825px;top:621px;width:90px;height:14px;background:#a0ccff"></div><div class="t" style="left:825px;top:622px;font-size:11px;color:#b0608e;width:90px;text-align:center">12</div><div style="position:absolute;left:916px;top:621px;width:90px;height:14px;background:#a0ccff"></div><div class="t" style="left:916px;top:622px;font-size:11px;color:#b0608e;width:90px;text-align:center">12</div><div style="position:absolute;left:1007px;top:621px;width:90px;height:14px;background:#a0ccff"></div><div class="t" style="left:1007px;top:622px;font-size:11px;color:#b0608e;width:90px;text-align:center">12</div><div style="position:absolute;left:551px;top:621px;width:1px;height:15px;background:#e2e2e2"></div><div style="position:absolute;left:642px;top:621px;width:1px;height:15px;background:#e2e2e2"></div><div style="position:absolute;left:733px;top:621px;width:1px;height:15px;background:#e2e2e2"></div><div style="position:absolute;left:824px;top:621px;width:1px;height:15px;background:#e2e2e2"></div><div style="position:absolute;left:915px;top:621px;width:1px;height:15px;background:#e2e2e2"></div><div style="position:absolute;left:1006px;top:621px;width:1px;height:15px;background:#e2e2e2"></div><div style="position:absolute;left:1097px;top:621px;width:1px;height:15px;background:#e2e2e2"></div><div style="position:absolute;left:461px;top:635px;width:636px;height:1px;background:#e2e2e2"></div><div style="position:absolute;left:69px;top:230px;width:77px;height:17px;overflow:hidden;background:#d8d8d8"><div style="position:absolute;left:-6px;top:-6px;width:89px;height:29px;filter:blur(2.5px);background:radial-gradient(ellipse 22px 3.5px at 36px 15px,rgba(0,0,0,.10),transparent),radial-gradient(ellipse 8px 4px at 73px 15px,rgba(0,0,0,.07),transparent),linear-gradient(180deg,#c8c8c8 0,#c8c8c8 7px,transparent 9px),linear-gradient(90deg,#c4bca4 0,#c4bca4 7px,#d6d6d6 9px,#d8d8d8 55px,#e2e2e2 70px,#ececec 83px,#f2f2f2 89px)"></div></div><div style="position:absolute;left:26px;top:233px;width:11px;height:11px;box-sizing:border-box;border:1px solid #a0a0a0;border-radius:1.5px;background:#fffdf0"></div><div style="position:absolute;left:28px;top:238px;width:7px;height:1px;background:#222"></div><div style="position:absolute;left:41px;top:248px;width:11px;height:11px;box-sizing:border-box;border:1px solid #a0a0a0;border-radius:1.5px;background:#fffdf0"></div><div style="position:absolute;left:43px;top:253px;width:7px;height:1px;background:#222"></div><div style="position:absolute;left:56px;top:263px;width:11px;height:11px;box-sizing:border-box;border:1px solid #a0a0a0;border-radius:1.5px;background:#fffdf0"></div><div style="position:absolute;left:58px;top:268px;width:7px;height:1px;background:#222"></div><div style="position:absolute;left:41px;top:368px;width:11px;height:11px;box-sizing:border-box;border:1px solid #a0a0a0;border-radius:1.5px;background:#fffdf0"></div><div style="position:absolute;left:43px;top:373px;width:7px;height:1px;background:#222"></div><div style="position:absolute;left:56px;top:383px;width:11px;height:11px;box-sizing:border-box;border:1px solid #a0a0a0;border-radius:1.5px;background:#fffdf0"></div><div style="position:absolute;left:58px;top:388px;width:7px;height:1px;background:#222"></div><div style="position:absolute;left:56px;top:413px;width:11px;height:11px;box-sizing:border-box;border:1px solid #a0a0a0;border-radius:1.5px;background:#fffdf0"></div><div style="position:absolute;left:58px;top:418px;width:7px;height:1px;background:#222"></div><div style="position:absolute;left:41px;top:443px;width:11px;height:11px;box-sizing:border-box;border:1px solid #a0a0a0;border-radius:1.5px;background:#fffdf0"></div><div style="position:absolute;left:43px;top:448px;width:7px;height:1px;background:#222"></div><div style="position:absolute;left:56px;top:458px;width:11px;height:11px;box-sizing:border-box;border:1px solid #a0a0a0;border-radius:1.5px;background:#fffdf0"></div><div style="position:absolute;left:58px;top:463px;width:7px;height:1px;background:#222"></div><div style="position:absolute;left:56px;top:548px;width:11px;height:11px;box-sizing:border-box;border:1px solid #a0a0a0;border-radius:1.5px;background:#fffdf0"></div><div style="position:absolute;left:58px;top:553px;width:7px;height:1px;background:#222"></div><div style="position:absolute;left:31px;top:244px;width:1px;height:391px;background:#a8a8a8"></div><div style="position:absolute;left:31px;top:634px;width:8px;height:1px;background:#a8a8a8"></div><div style="position:absolute;left:46px;top:259px;width:1px;height:106px;background:#a8a8a8"></div><div style="position:absolute;left:46px;top:364px;width:8px;height:1px;background:#a8a8a8"></div><div style="position:absolute;left:61px;top:274px;width:1px;height:91px;background:#a8a8a8"></div><div style="position:absolute;left:61px;top:364px;width:8px;height:1px;background:#a8a8a8"></div><div style="position:absolute;left:46px;top:379px;width:1px;height:61px;background:#a8a8a8"></div><div style="position:absolute;left:46px;top:439px;width:8px;height:1px;background:#a8a8a8"></div><div style="position:absolute;left:61px;top:394px;width:1px;height:16px;background:#a8a8a8"></div><div style="position:absolute;left:61px;top:409px;width:8px;height:1px;background:#a8a8a8"></div><div style="position:absolute;left:61px;top:424px;width:1px;height:16px;background:#a8a8a8"></div><div style="position:absolute;left:61px;top:439px;width:8px;height:1px;background:#a8a8a8"></div><div style="position:absolute;left:46px;top:454px;width:1px;height:181px;background:#a8a8a8"></div><div style="position:absolute;left:46px;top:634px;width:8px;height:1px;background:#a8a8a8"></div><div style="position:absolute;left:61px;top:469px;width:1px;height:76px;background:#a8a8a8"></div><div style="position:absolute;left:61px;top:544px;width:8px;height:1px;background:#a8a8a8"></div><div style="position:absolute;left:61px;top:559px;width:1px;height:76px;background:#a8a8a8"></div><div style="position:absolute;left:61px;top:634px;width:8px;height:1px;background:#a8a8a8"></div><div style="position:absolute;left:69px;top:636px;width:1px;height:28px;background:#c9bd96"></div>
</div>
</body></html>
